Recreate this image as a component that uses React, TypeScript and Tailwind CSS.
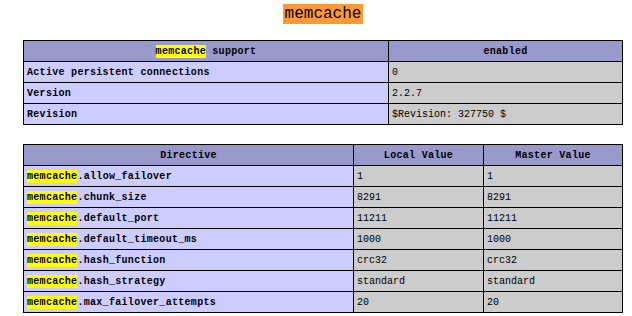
const HL = "inline-block bg-[#ffff00] leading-[13px]";

const directives: [string, string, string][] = [
  ["allow_failover", "1", "1"],
  ["chunk_size", "8291", "8291"],
  ["default_port", "11211", "11211"],
  ["default_timeout_ms", "1000", "1000"],
  ["hash_function", "crc32", "crc32"],
  ["hash_strategy", "standard", "standard"],
  ["max_failover_attempts", "20", "20"],
];

const th = "h-[21px] border border-black bg-[#9999cc] p-0 text-center font-bold tracking-[0.3px]";
const tdE = "h-[21px] border border-black bg-[#ccccff] px-[3px] py-0 text-left font-bold tracking-[0.3px]";
const tdV = "h-[21px] border border-black bg-[#cccccc] px-[3px] py-0 text-left";

export default function App() {
  return (
    <div className="h-[316px] w-[632px] bg-white font-['Liberation_Mono',monospace] text-[10px] text-black">
      <div className="flex justify-center pt-1 pl-[14px]">
        <h2 className="bg-[#ff9933] px-[2px] text-[16px] leading-[20px] font-normal">memcache</h2>
      </div>

      <table className="ml-[23px] mt-4 w-[600px] table-fixed border-collapse">
        <tbody>
          <tr>
            <th className={`${th} w-[365px]`}>
              <span className={HL}>memcache</span> support
            </th>
            <th className={th}>enabled</th>
          </tr>
          <tr>
            <td className={tdE}>Active persistent connections</td>
            <td className={tdV}>0</td>
          </tr>
          <tr>
            <td className={tdE}>Version</td>
            <td className={tdV}>2.2.7</td>
          </tr>
          <tr>
            <td className={tdE}>Revision</td>
            <td className={tdV}>$Revision: 327750 $</td>
          </tr>
        </tbody>
      </table>

      <table className="ml-[23px] mt-[19px] w-[600px] table-fixed border-collapse">
        <tbody>
          <tr>
            <th className={`${th} w-[330px]`}>Directive</th>
            <th className={`${th} w-[130px]`}>Local Value</th>
            <th className={th}>Master Value</th>
          </tr>
          {directives.map(([name, local, master]) => (
            <tr key={name}>
              <td className={tdE}>
                <span className={HL}>memcache</span>.{name}
              </td>
              <td className={tdV}>{local}</td>
              <td className={tdV}>{master}</td>
            </tr>
          ))}
        </tbody>
      </table>
    </div>
  );
}
